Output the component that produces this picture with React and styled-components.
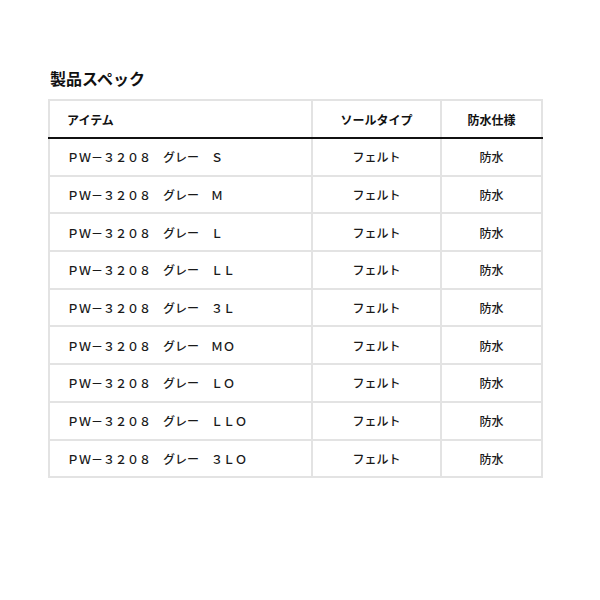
import React from 'react';
import styled, { createGlobalStyle } from 'styled-components';

const GlobalStyle = createGlobalStyle`
    html, body {
        margin: 0;
        padding: 0;
        background: #fff;
    }
    body {
        font-family: "Noto Sans CJK JP", "Noto Sans", sans-serif;
        color: #1a1a1a;
    }
`;

const Page = styled.div`
    padding: 66px 0 0 48px;
`;

const Title = styled.h2`
    font-size: 16px;
    font-weight: 700;
    margin: 0 0 9px 2px;
    line-height: 24px;
    color: #111;
`;

const Table = styled.table`
    border-collapse: collapse;
    width: 493px;
    table-layout: fixed;
    border: 2px solid #e3e3e3;
`;

const HeadCell = styled.th`
    font-size: 12px;
    font-weight: 700;
    height: 36px;
    padding: 0 0 0 ${p => (p.$left ? '17px' : '0')};
    text-align: ${p => (p.$left ? 'left' : 'center')};
    border-left: 2px solid #e3e3e3;
    border-bottom: 2px solid #111;
    color: #111;
`;

const Cell = styled.td`
    font-size: 12px;
    font-weight: 500;
    height: 35.7px;
    padding: 0 0 0 ${p => (p.$left ? '17px' : '0')};
    text-align: ${p => (p.$left ? 'left' : 'center')};
    border: 2px solid #e3e3e3;
    color: #1a1a1a;
    white-space: nowrap;
`;

const sizes = ['Ｓ', 'Ｍ', 'Ｌ', 'ＬＬ', '３Ｌ', 'ＭＯ', 'ＬＯ', 'ＬＬＯ', '３ＬＯ'];

export default function App() {
    return (
        <Page>
            <GlobalStyle />
            <Title>製品スペック</Title>
            <Table>
                <colgroup>
                    <col style={{ width: 263 }} />
                    <col style={{ width: 129 }} />
                    <col style={{ width: 101 }} />
                </colgroup>
                <thead>
                    <tr>
                        <HeadCell $left>アイテム</HeadCell>
                        <HeadCell>ソールタイプ</HeadCell>
                        <HeadCell>防水仕様</HeadCell>
                    </tr>
                </thead>
                <tbody>
                    {sizes.map(s => (
                        <tr key={s}>
                            <Cell $left>ＰＷ－３２０８　グレー　{s}</Cell>
                            <Cell>フェルト</Cell>
                            <Cell>防水</Cell>
                        </tr>
                    ))}
                </tbody>
            </Table>
        </Page>
    );
}
